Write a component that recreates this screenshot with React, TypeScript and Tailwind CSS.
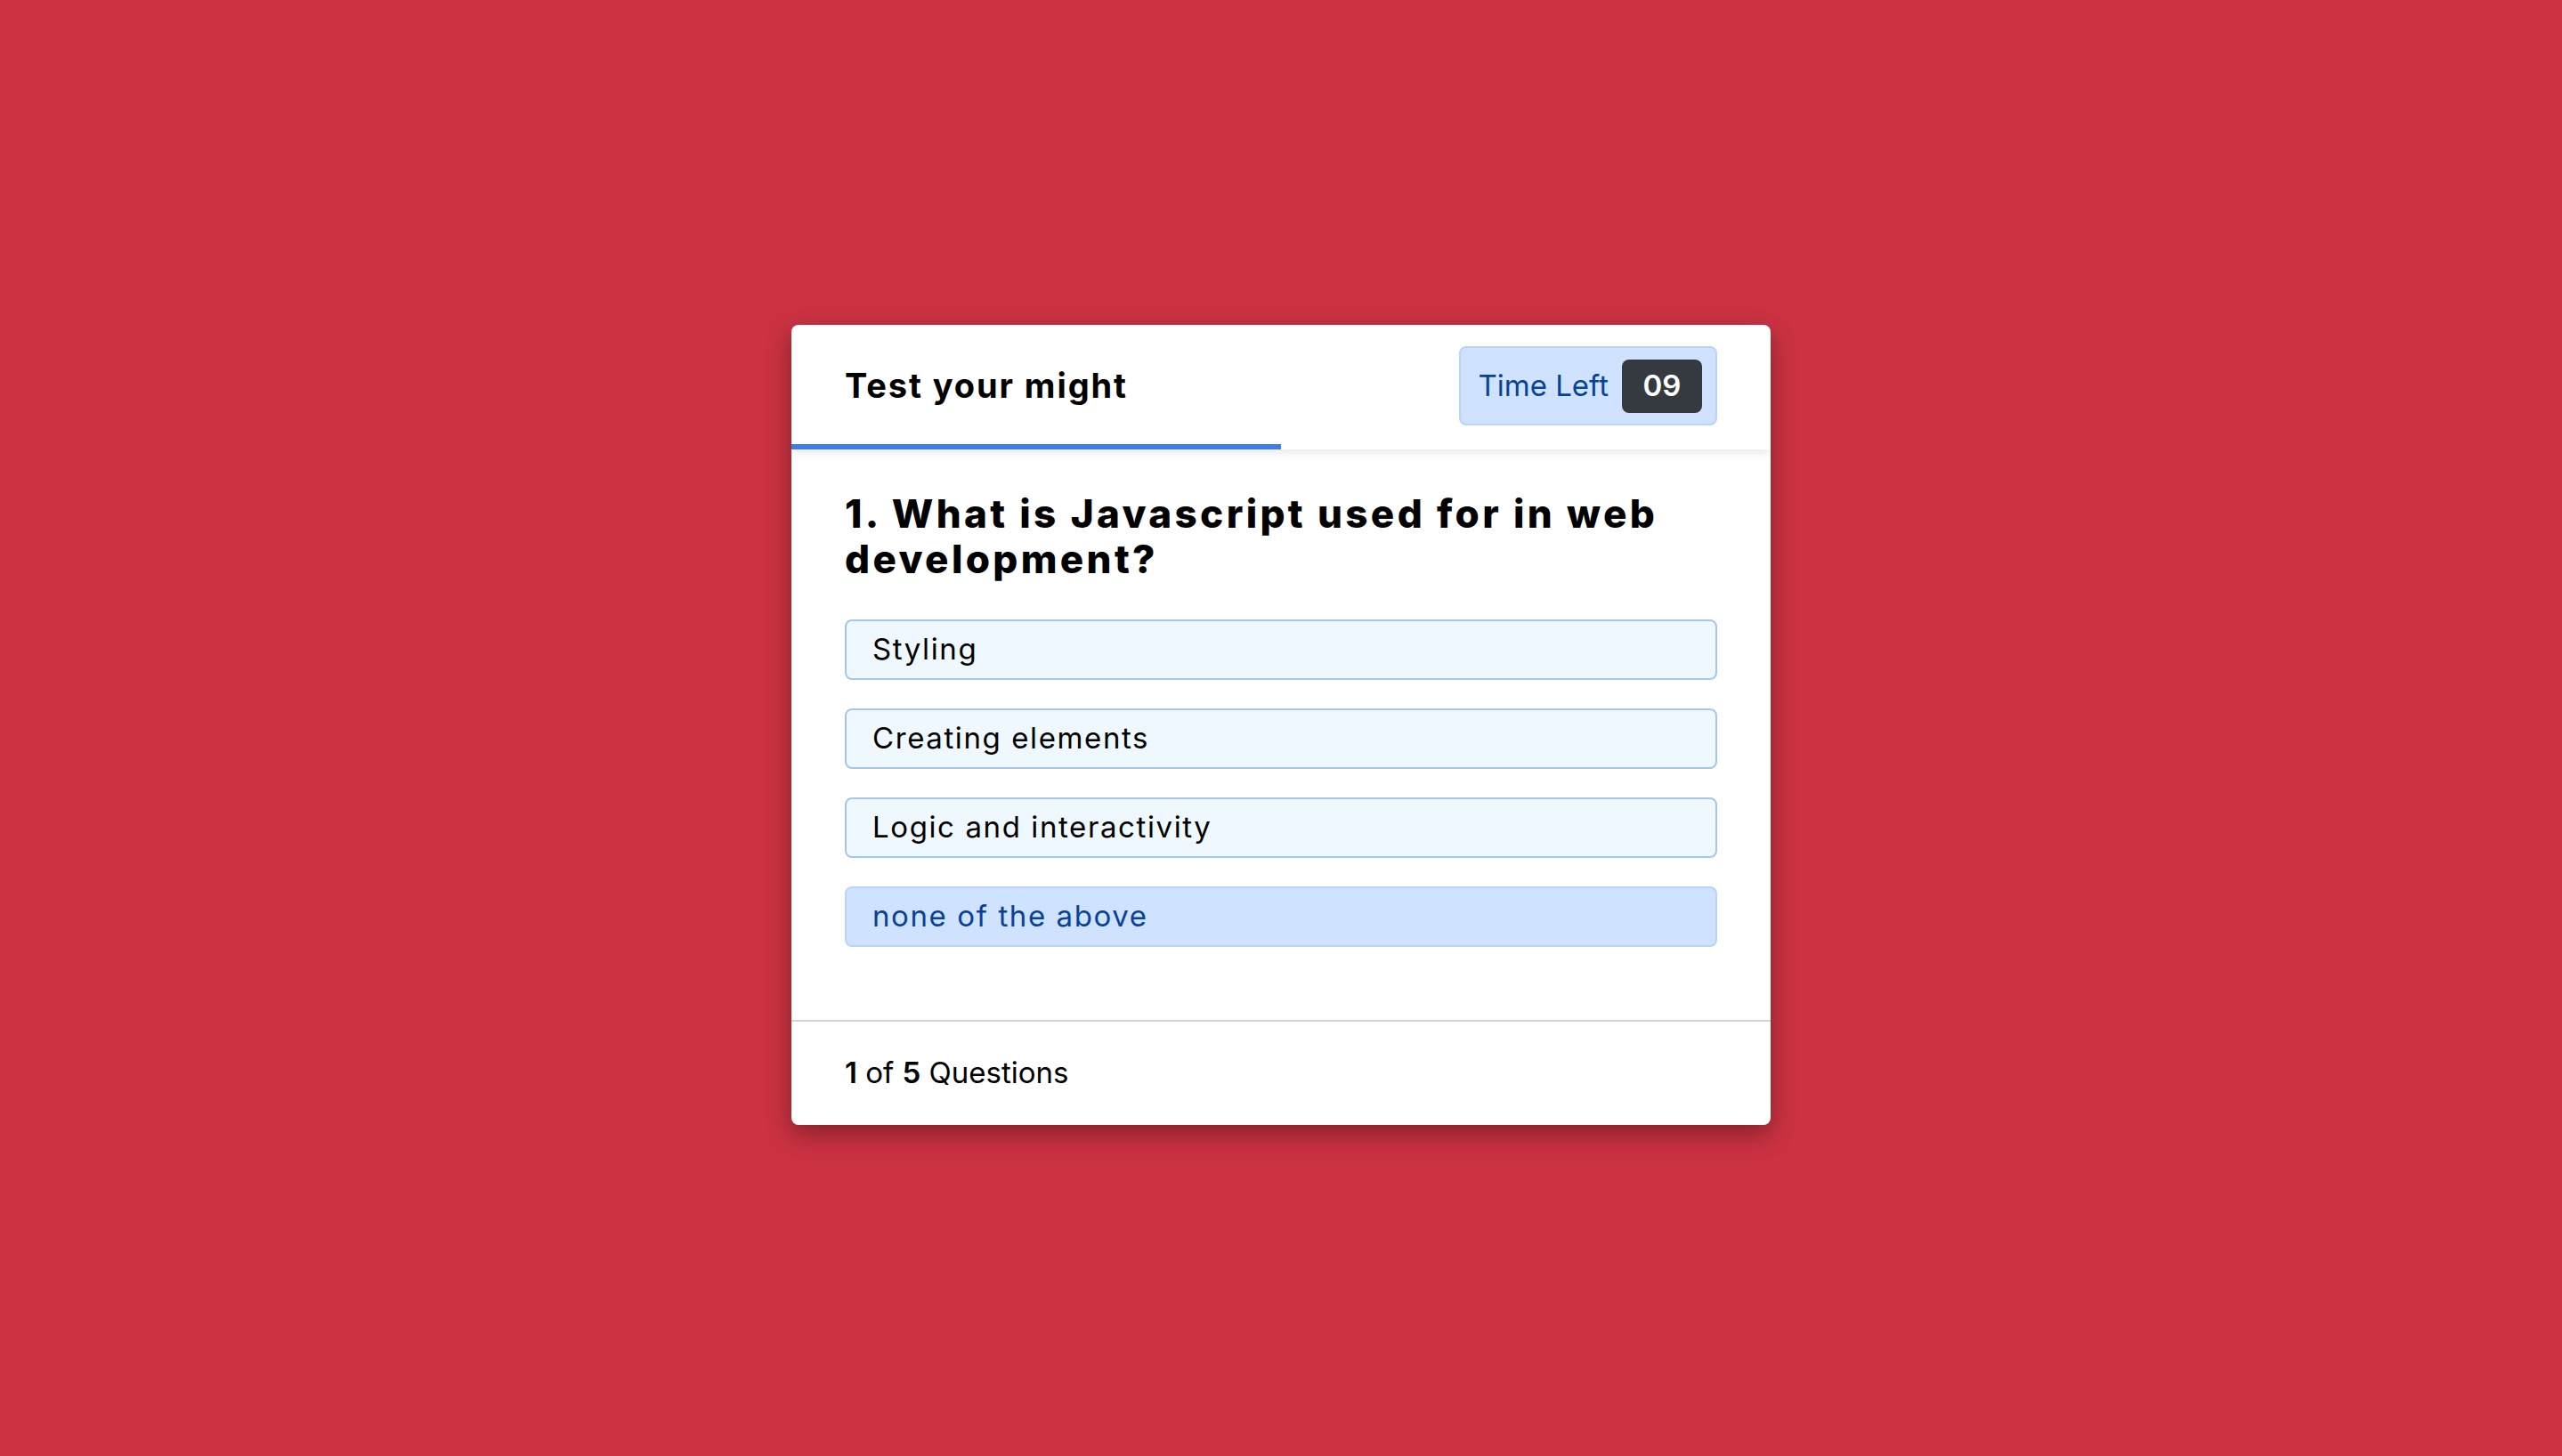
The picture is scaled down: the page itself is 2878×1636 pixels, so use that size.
import React from "react";

const options = ["Styling", "Creating elements", "Logic and interactivity", "none of the above"];

export default function App() {
  return (
    <div className="min-h-screen w-full bg-[#cb3242] flex items-center justify-center font-['Inter',sans-serif] text-black">
      <div className="mb-[7px] w-[1100px] bg-white rounded-[8px] shadow-[0_10px_28px_rgba(0,0,0,0.35)] overflow-hidden">
        <div className="relative z-10 flex flex-col shadow-[0_4px_10px_rgba(0,0,0,0.09)]">
          <div className="h-[134px] pt-[3px] px-[60px] flex items-center justify-between">
            <h1 className="text-[38px] font-bold tracking-[1.9px]">Test your might</h1>
            <div className="h-[89px] flex items-center gap-[15px] pl-[19px] pr-[15px] border-2 border-[#b6d4fe] bg-[#cfe2ff] rounded-[8px] text-[#084298] text-[33px]">
              <span>Time Left</span>
              <span className="w-[90px] h-[60px] flex items-center justify-center bg-[#343a40] rounded-[8px] text-white font-semibold">09</span>
            </div>
          </div>
          <div className="h-[6px] w-1/2 bg-[#3d7de8]" />
        </div>
        <div className="px-[60px] pt-[47px] pb-[82px]">
          <h2 className="text-[44px] font-extrabold leading-[51px] tracking-[3.35px]">1. What is Javascript used for in web development?</h2>
          <div className="mt-[42px] flex flex-col gap-[32px]">
            {options.map((o, i) =>
              i === 3 ? (
                <div key={o} className="h-[68px] flex items-center px-[29px] border-2 border-[#b6d4fe] bg-[#cfe2ff] rounded-[8px] text-[33px] tracking-[1.6px] text-[#084298]">{o}</div>
              ) : (
                <div key={o} className="h-[68px] flex items-center px-[29px] border-2 border-[#a3c7eb] bg-[#f0f8ff] rounded-[8px] text-[33px] tracking-[1.6px]">{o}</div>
              )
            )}
          </div>
        </div>
        <div className="border-t-2 border-[#d4d4d4] h-[118px] px-[60px] flex items-center text-[33px]">
          <span><span className="font-semibold">1</span> of <span className="font-semibold">5</span> Questions</span>
        </div>
      </div>
    </div>
  );
}
